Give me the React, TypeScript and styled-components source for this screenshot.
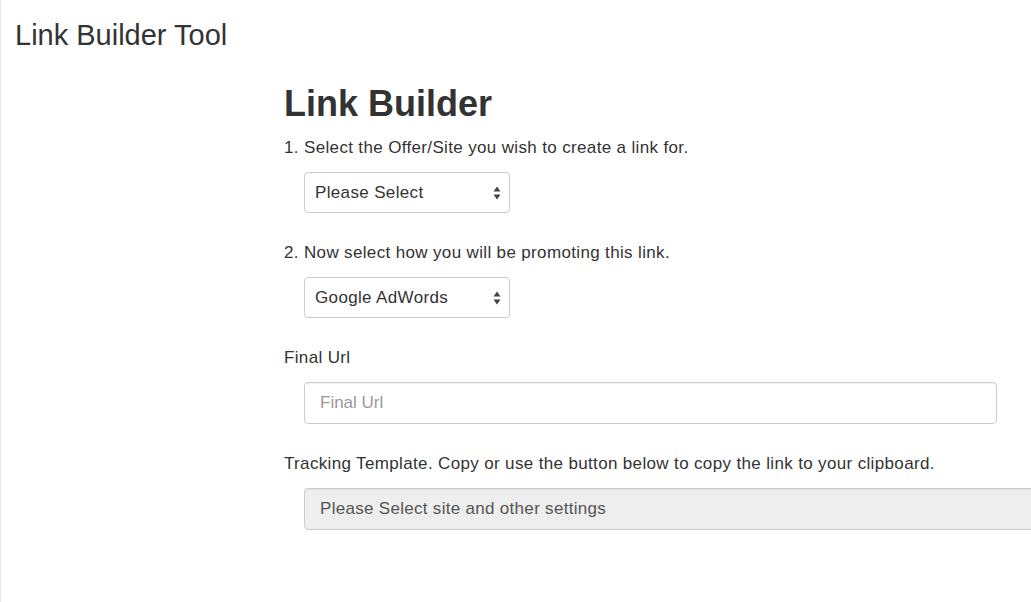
import styled, { createGlobalStyle } from "styled-components"

const GlobalStyle = createGlobalStyle`
  html, body {
    margin: 0;
    padding: 0;
    background: #ffffff;
    overflow: hidden;
  }
  body {
    font-family: "Liberation Sans", Arial, Helvetica, sans-serif;
    color: #333333;
  }
`

const Page = styled.div`
  min-height: 100vh;
  border-left: 1px solid #e6e6e6;
  box-sizing: border-box;
`

const Header = styled.header`
  padding: 18px 0 0 14px;
`

const PageTitle = styled.h2`
  margin: 0;
  font-size: 29px;
  line-height: 34px;
  font-weight: 300;
  color: #333333;
`

const Content = styled.main`
  padding-left: 283px;
`

const Heading = styled.h1`
  margin: 32px 0 14px;
  font-size: 36px;
  line-height: 40px;
  font-weight: 700;
  color: #333333;
`

const FormGroup = styled.div`
  margin-bottom: 30px;
`

const Label = styled.label`
  display: block;
  margin-bottom: 14px;
  font-size: 17px;
  line-height: 20px;
  letter-spacing: 0.35px;
  color: #333333;
`

const SelectWrap = styled.div`
  position: relative;
  width: 206px;
  margin-left: 20px;
`

const Select = styled.select`
  appearance: none;
  -webkit-appearance: none;
  display: block;
  width: 100%;
  height: 41px;
  padding: 0 28px 0 10px;
  border: 1px solid #cccccc;
  border-radius: 4px;
  background: #ffffff;
  font-family: inherit;
  font-size: 17px;
  letter-spacing: 0.35px;
  color: #333333;
  box-sizing: border-box;
  outline: none;
`

const Arrows = styled.svg`
  position: absolute;
  right: 9px;
  top: 50%;
  margin-top: -7px;
  pointer-events: none;
`

const TextInput = styled.input<{ $width: number; $muted?: boolean }>`
  display: block;
  width: ${(p) => p.$width}px;
  height: 42px;
  margin-left: 20px;
  padding: 0 15px;
  border: 1px solid #cccccc;
  border-radius: 4px;
  background: ${(p) => (p.$muted ? "#eeeeee" : "#ffffff")};
  box-shadow: inset 0 1px 1px rgba(0, 0, 0, 0.05);
  font-family: inherit;
  font-size: 17px;
  letter-spacing: 0.3px;
  color: #555555;
  box-sizing: border-box;
  outline: none;

  &::placeholder {
    color: #999999;
    letter-spacing: 0;
  }
`

const SelectField = ({ value, options }: { value: string; options: string[] }) => {
  return (
    <SelectWrap>
      <Select defaultValue={value}>
        {options.map((o) => (
          <option key={o}>{o}</option>
        ))}
      </Select>
      <Arrows width="8" height="14" viewBox="0 0 8 14">
        <path d="M4 0.5 L7.5 5.5 L0.5 5.5 Z" fill="#444444" />
        <path d="M0.5 8.5 L7.5 8.5 L4 13.5 Z" fill="#444444" />
      </Arrows>
    </SelectWrap>
  )
}

export default function App() {
  return (
    <>
      <GlobalStyle />
      <Page>
        <Header>
          <PageTitle>Link Builder Tool</PageTitle>
        </Header>
        <Content>
          <Heading>Link Builder</Heading>
          <FormGroup>
            <Label>1. Select the Offer/Site you wish to create a link for.</Label>
            <SelectField value="Please Select" options={["Please Select"]} />
          </FormGroup>
          <FormGroup>
            <Label>2. Now select how you will be promoting this link.</Label>
            <SelectField
              value="Google AdWords"
              options={["Google AdWords", "Bing Ads", "Facebook"]}
            />
          </FormGroup>
          <FormGroup>
            <Label>Final Url</Label>
            <TextInput $width={693} placeholder="Final Url" />
          </FormGroup>
          <FormGroup>
            <Label>Tracking Template. Copy or use the button below to copy the link to your clipboard.</Label>
            <TextInput
              $width={780}
              $muted
              readOnly
              value="Please Select site and other settings"
            />
          </FormGroup>
        </Content>
      </Page>
    </>
  )
}
